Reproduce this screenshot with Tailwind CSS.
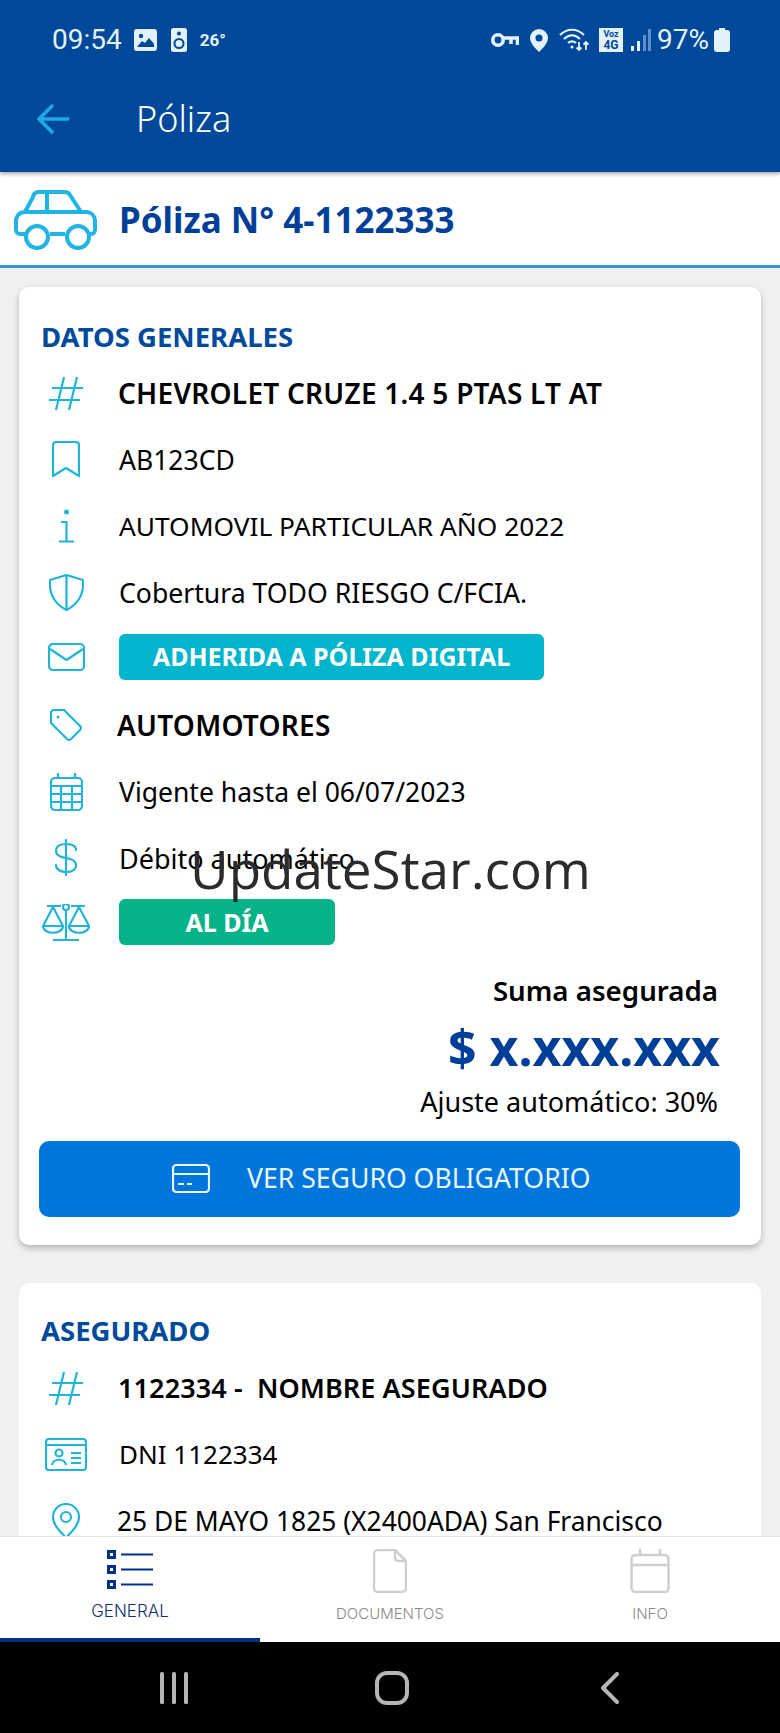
<!DOCTYPE html>
<html lang="es">
<head>
    <meta charset="UTF-8">
    <meta name="viewport" content="width=device-width, initial-scale=1.0">
    <title>Póliza</title>
    <script src="https://cdn.jsdelivr.net/npm/@tailwindcss/browser@4"></script>
</head>
<body class="bg-[#f0f0f0] font-['Noto_Sans',sans-serif] text-black">
    <div class="relative flex flex-col h-[1733px] w-[780px] overflow-hidden">
        <!-- Status bar + toolbar -->
        <header class="relative z-10 h-[172px] shrink-0 bg-[#00489a] text-[#e3f1fb] shadow-[0_2px_4px_rgba(0,0,0,0.35)]">
            <div class="flex justify-between items-center h-[80px] pl-[52px] pr-[50px]">
                <div class="flex items-center">
                    <span class="font-['Roboto',sans-serif] text-[28px] leading-none">09:54</span>
                    <svg class="ml-[12px]" width="23" height="22" viewBox="0 0 23 22"><rect width="23" height="22" rx="3" fill="#e3f1fb"/><circle cx="7" cy="7" r="2.2" fill="#00489a"/><path d="M3 18l5-6 3 2 4-5 5 6v3H3z" fill="#00489a"/></svg>
                    <svg class="ml-[14px]" width="16" height="24" viewBox="0 0 16 24"><rect width="16" height="24" rx="2.5" fill="#e3f1fb"/><circle cx="8" cy="5.5" r="2" fill="#00489a"/><circle cx="8" cy="15.5" r="4.5" fill="none" stroke="#00489a" stroke-width="2"/></svg>
                    <span class="ml-[13px] font-['Roboto',sans-serif] font-bold text-[17px] leading-none">26°</span>
                </div>
                <div class="flex items-center">
                    <svg width="28" height="18" viewBox="0 0 28 18" fill="none" stroke="#e3f1fb" stroke-width="3.600"><circle cx="7" cy="9" r="5.200"/><path d="M12 7h14.500v7M20 8v5"/></svg>
                    <svg class="ml-[11px]" width="18" height="23" viewBox="0 0 18 23"><path d="M9 0a9 9 0 00-9 9c0 5 5 10 9 14 4-4 9-9 9-14a9 9 0 00-9-9z" fill="#e3f1fb"/><circle cx="9" cy="9" r="3.500" fill="#00489a"/></svg>
                    <svg class="ml-[11px]" width="30" height="24" viewBox="0 0 30 24" fill="none" stroke="#e3f1fb" stroke-width="2.200"><path d="M1 7c7-7 17-7 24 0M5 11c5-5 11-5 16 0M9 15c3-2.500 5-2.500 8 0"/><circle cx="13" cy="19" r="1.500" fill="#e3f1fb" stroke="none"/><path d="M20 14v8m-2.500-2.500l2.500 2.500 2.500-2.500M27 22v-8m-2.500 2.500l2.500-2.500 2.500 2.500" stroke-width="1.800"/></svg>
                    <div class="ml-[10px] flex flex-col items-center justify-center w-[24px] h-[24px] bg-[#e3f1fb] text-[#00489a] font-['Roboto',sans-serif] font-bold leading-none">
                        <span class="text-[9px]">Voz</span>
                        <span class="text-[12px]">4G</span>
                    </div>
                    <svg class="ml-[8px]" width="20" height="24" viewBox="0 0 20 24"><rect x="0" y="18" width="3" height="5" fill="#e3f1fb"/><rect x="6" y="13" width="3" height="10" fill="#e3f1fb"/><rect x="12" y="7" width="3" height="16" fill="#5f8fc8"/><rect x="17" y="1" width="3" height="22" fill="#5f8fc8"/></svg>
                    <span class="ml-[6px] font-['Roboto',sans-serif] text-[28px] leading-none">97%</span>
                    <svg class="ml-[5px]" width="16" height="24" viewBox="0 0 16 24"><path d="M5 0h6v2h2a3 3 0 013 3v16a3 3 0 01-3 3H3a3 3 0 01-3-3V5a3 3 0 013-3h2z" fill="#e3f1fb"/></svg>
                </div>
            </div>
            <div class="flex items-center h-[77px] pl-[37px]">
                <svg width="33" height="30" viewBox="0 0 33 30" fill="none" stroke="#1fa8e8" stroke-width="3.500" stroke-linecap="round" stroke-linejoin="round"><path d="M15 2L2 15l13 13M3 15h28"/></svg>
                <span class="ml-[66px] text-[36px] font-light text-white">Póliza</span>
            </div>
        </header>

        <!-- Policy title -->
        <div class="flex items-center shrink-0 h-[96px] pl-[14px] pt-[2px] bg-white border-b-[3px] border-[#3a97d2]">
            <svg width="86" height="60" viewBox="0 0 86 60" fill="none" stroke="#1fb4e4" stroke-width="4" stroke-linejoin="round"><path d="M11 44H6a4 4 0 01-4-4v-8a9 9 0 019-10l8-15a6 6 0 015-5h27a6 6 0 015 3l11 17h6a9 9 0 018 8v10a4 4 0 01-4 4h-3M36 44H51M11 22h57M33 2v20"/><circle cx="23" cy="47" r="11"/><circle cx="64" cy="47" r="11"/></svg>
            <h1 class="ml-[19px] text-[35px] font-bold text-[#003f98] leading-none">Póliza N° 4-1122333</h1>
        </div>

        <!-- Cards -->
        <main class="flex-1 min-h-0 overflow-hidden px-[19px] pt-[19px]">
            <section class="bg-white rounded-[10px] shadow-[0_3px_6px_rgba(0,0,0,0.25)] h-[958px] px-[20px] pt-[34px]">
                <h2 class="text-[27.5px] leading-[32px] font-bold text-[#004a9b] ml-[2px] mb-[7px]">DATOS GENERALES</h2>

                <div class="flex items-center h-[66.4px]">
                    <div class="w-[54px] flex justify-center shrink-0"><svg width="34" height="35" viewBox="0 0 34 35" fill="none" stroke="#1fb4d8" stroke-width="2.200"><path d="M15 1L7 34M28 1l-8 33M3 12h31M0 24h31"/></svg></div>
                    <span class="ml-[25px] text-[28px] tracking-[0.25px] font-semibold">CHEVROLET CRUZE 1.4 5 PTAS LT AT</span>
                </div>
                <div class="flex items-center h-[66.4px]">
                    <div class="w-[54px] flex justify-center shrink-0"><svg width="28" height="37" viewBox="0 0 28 37" fill="none" stroke="#1fb4d8" stroke-width="2.200" stroke-linejoin="round"><path d="M1 35V4a3 3 0 013-3h20a3 3 0 013 3v31L14 27z"/></svg></div>
                    <span class="ml-[26px] mt-[2px] text-[26.5px]">AB123CD</span>
                </div>
                <div class="flex items-center h-[66.4px]">
                    <div class="w-[54px] flex justify-center shrink-0"><svg width="15" height="34" viewBox="0 0 15 34" fill="none" stroke="#1fb4d8" stroke-width="2.200"><circle cx="7.500" cy="3" r="2.500" fill="#1fb4d8" stroke="none"/><path d="M2 13h5.500v19M0 32.500h15"/></svg></div>
                    <span class="ml-[26px] mt-[2px] text-[26.3px]">AUTOMOVIL PARTICULAR AÑO 2022</span>
                </div>
                <div class="flex items-center h-[66.4px]">
                    <div class="w-[54px] flex justify-center shrink-0"><svg width="35" height="37" viewBox="0 0 35 37" fill="none" stroke="#1fb4d8" stroke-width="2.200" stroke-linejoin="round"><path d="M17.500 1L34 6c1 12-3 23-16.500 30C4 29 0 18 1 6zM17.500 1v35"/></svg></div>
                    <span class="ml-[26px] mt-[3px] text-[26.6px]">Cobertura TODO RIESGO C/FCIA.</span>
                </div>
                <div class="flex items-center h-[66.4px] pb-[4px]">
                    <div class="w-[54px] flex justify-center shrink-0"><svg width="37" height="28" viewBox="0 0 37 28" fill="none" stroke="#1fb4d8" stroke-width="2.200" stroke-linejoin="round"><rect x="1" y="1" width="35" height="26" rx="4"/><path d="M2 6l16.500 11L35 6"/></svg></div>
                    <div class="ml-[26px] flex items-center justify-center w-[425px] h-[46px] rounded-[6px] bg-[#00b5cc] text-white text-[25px] font-bold">ADHERIDA A PÓLIZA DIGITAL</div>
                </div>
                <div class="flex items-center h-[66.4px]">
                    <div class="w-[54px] flex justify-center shrink-0"><svg width="32" height="32" viewBox="0 0 32 32" fill="none" stroke="#1fb4d8" stroke-width="2.200" stroke-linejoin="round"><path d="M1 4a3 3 0 013-3h10l16 16a3 3 0 010 4L21 30a3 3 0 01-4 0L1 14z"/><circle cx="8" cy="8" r="1.500" fill="#1fb4d8" stroke="none"/></svg></div>
                    <span class="ml-[24px] text-[28px] tracking-[0.25px] font-semibold">AUTOMOTORES</span>
                </div>
                <div class="flex items-center h-[66.4px]">
                    <div class="w-[54px] flex justify-center shrink-0"><svg width="33" height="38" viewBox="0 0 33 38" fill="none" stroke="#1fb4d8" stroke-width="2.200" stroke-linejoin="round"><rect x="1" y="5" width="31" height="32" rx="4"/><path d="M8 0v5M25 0v5M1 13h31M1 21h31M1 29h31M11 13v24M22 13v24"/></svg></div>
                    <span class="ml-[26px] mt-[2px] text-[26.5px]">Vigente hasta el 06/07/2023</span>
                </div>
                <div class="flex items-center h-[66.4px]">
                    <div class="w-[54px] flex justify-center shrink-0"><svg width="22" height="37" viewBox="0 0 22 37" fill="none" stroke="#1fb4d8" stroke-width="2.200" stroke-linecap="round"><path d="M21 11c0-4-4-6-10-6S1 7 1 12c0 4 4 6 10 7 6 1 10 3 10 7 0 5-4 7-10 7S1 30 1 26M11 1v35"/></svg></div>
                    <span class="ml-[26px] mt-[3px] text-[27px]">Débito automático</span>
                </div>
                <div class="flex items-center h-[66.4px] pb-[4px]">
                    <div class="w-[54px] flex justify-center shrink-0"><svg width="48" height="37" viewBox="0 0 48 37" fill="none" stroke="#1fb4d8" stroke-width="2.200" stroke-linejoin="round"><path d="M24 6v30M11 36h26M5 2h14M29 2h14M11 3L1 22h20zM37 3L27 22h20z"/><circle cx="24" cy="3" r="3"/><path d="M1 22c0 9 20 9 20 0M27 22c0 9 20 9 20 0"/></svg></div>
                    <div class="ml-[26px] flex items-center justify-center w-[216px] h-[46px] rounded-[6px] bg-[#06b388] text-white text-[25px] font-bold">AL DÍA</div>
                </div>

                <div class="mt-[9px] pr-[23px] text-right">
                    <p class="text-[27.7px] leading-[46px] font-semibold">Suma asegurada</p>
                    <p class="text-[50px] leading-[66px] font-bold text-[#003f98] mr-[-2px] mt-[1px]">$ x.xxx.xxx</p>
                    <p class="text-[27px] leading-[40px] mt-[2px]">Ajuste automático: 30%</p>
                </div>
                <button class="flex items-center w-[701px] h-[76px] mt-[19px] pl-[133px] rounded-[10px] bg-[#0076dc] text-[#e8f6ff] text-[26.6px]">
                    <svg width="38" height="29" viewBox="0 0 38 29" fill="none" stroke="#e8f6ff" stroke-width="2.200" stroke-linejoin="round"><rect x="1" y="1" width="36" height="27" rx="3.500"/><path d="M1 10h36M6 20h6M15 20h5"/></svg>
                    <span class="ml-[37px]">VER SEGURO OBLIGATORIO</span>
                </button>
            </section>

            <section class="mt-[38px] bg-white rounded-[10px] px-[20px] pt-[32px] h-[400px]">
                <h2 class="text-[27.5px] leading-[32px] font-bold text-[#004a9b] ml-[2px] mb-[8px]">ASEGURADO</h2>
                <div class="flex items-center h-[66.4px]">
                    <div class="w-[54px] flex justify-center shrink-0"><svg width="34" height="35" viewBox="0 0 34 35" fill="none" stroke="#1fb4d8" stroke-width="2.200"><path d="M15 1L7 34M28 1l-8 33M3 12h31M0 24h31"/></svg></div>
                    <span class="ml-[25px] text-[27px] tracking-[0.1px] font-semibold whitespace-pre">1122334 -  NOMBRE ASEGURADO</span>
                </div>
                <div class="flex items-center h-[66.4px]">
                    <div class="w-[54px] flex justify-center shrink-0"><svg width="42" height="33" viewBox="0 0 42 33" fill="none" stroke="#1fb4d8" stroke-width="2.200" stroke-linejoin="round"><rect x="1" y="1" width="40" height="31" rx="3"/><path d="M1 7h40M26 15h10M26 20h10M26 25h10"/><circle cx="14" cy="15" r="3.500"/><path d="M7 27c1-7 13-7 14 0"/></svg></div>
                    <span class="ml-[26px] text-[26px]">DNI 1122334</span>
                </div>
                <div class="flex items-center h-[66.4px]">
                    <div class="w-[54px] flex justify-center shrink-0"><svg width="28" height="36" viewBox="0 0 28 36" fill="none" stroke="#1fb4d8" stroke-width="2.200" stroke-linejoin="round"><path d="M14 35C8 28 1 22 1 14a13 13 0 0126 0c0 8-7 14-13 21z"/><circle cx="14" cy="14" r="5"/></svg></div>
                    <span class="ml-[24px] mt-[2px] text-[26.4px]">25 DE MAYO 1825 (X2400ADA) San Francisco</span>
                </div>
            </section>
        </main>

        <!-- Bottom tabs -->
        <nav class="relative z-10 grid grid-cols-3 shrink-0 h-[106px] bg-white border-t border-[#e4e4e4] font-['Inter',sans-serif] font-light">
            <div class="flex flex-col items-center pt-[13px] border-b-4 border-[#00308a] text-[#14306e]">
                <svg width="46" height="39" viewBox="0 0 46 39" fill="none" stroke="#00308a"><rect x="1.500" y="1.500" width="6" height="6" stroke-width="3"/><rect x="1.500" y="16.500" width="6" height="6" stroke-width="3"/><rect x="1.500" y="31.500" width="6" height="6" stroke-width="3"/><path d="M14 4.500h32M14 19.500h32M14 34.500h32" stroke-width="2.200"/></svg>
                <span class="mt-[12px] text-[17px] leading-[20px]">GENERAL</span>
            </div>
            <div class="flex flex-col items-center pt-[12px] text-[#8a8a8a]">
                <svg width="34" height="44" viewBox="0 0 34 44" fill="none" stroke="#cfcfcf" stroke-width="2.500" stroke-linejoin="round"><path d="M22 1H5a4 4 0 00-4 4v34a4 4 0 004 4h24a4 4 0 004-4V12zM22 1v8a3 3 0 003 3h8"/></svg>
                <span class="mt-[11px] text-[15px] leading-[20px]">DOCUMENTOS</span>
            </div>
            <div class="flex flex-col items-center pt-[12px] text-[#8a8a8a]">
                <svg width="40" height="44" viewBox="0 0 40 44" fill="none" stroke="#cfcfcf" stroke-width="2.500" stroke-linejoin="round"><rect x="1.500" y="6" width="37" height="37" rx="4"/><path d="M1.500 16h37M10 0v6M30 0v6"/></svg>
                <span class="mt-[11px] text-[15px] leading-[20px]">INFO</span>
            </div>
        </nav>

        <!-- Android nav bar -->
        <div class="flex justify-between items-center shrink-0 h-[91px] bg-black pl-[160px] pr-[160px]">
            <svg width="28" height="32" viewBox="0 0 28 32" fill="#b5b5b5"><rect x="0" y="0" width="4" height="32" rx="1.500"/><rect x="12" y="0" width="4" height="32" rx="1.500"/><rect x="24" y="0" width="4" height="32" rx="1.500"/></svg>
            <svg class="mr-[5px]" width="34" height="34" viewBox="0 0 34 34" fill="none" stroke="#b5b5b5" stroke-width="4"><rect x="2" y="2" width="30" height="30" rx="10"/></svg>
            <svg width="20" height="32" viewBox="0 0 20 32" fill="none" stroke="#b5b5b5" stroke-width="4" stroke-linecap="round" stroke-linejoin="round"><path d="M17 2L3 16l14 14"/></svg>
        </div>

        <!-- Watermark -->
        <div class="absolute left-[190px] top-[833px] z-20 font-['Open_Sans',sans-serif] text-[53px] leading-[72px] text-[#2b2b2b]">UpdateStar.com</div>
    </div>
</body>
</html>
